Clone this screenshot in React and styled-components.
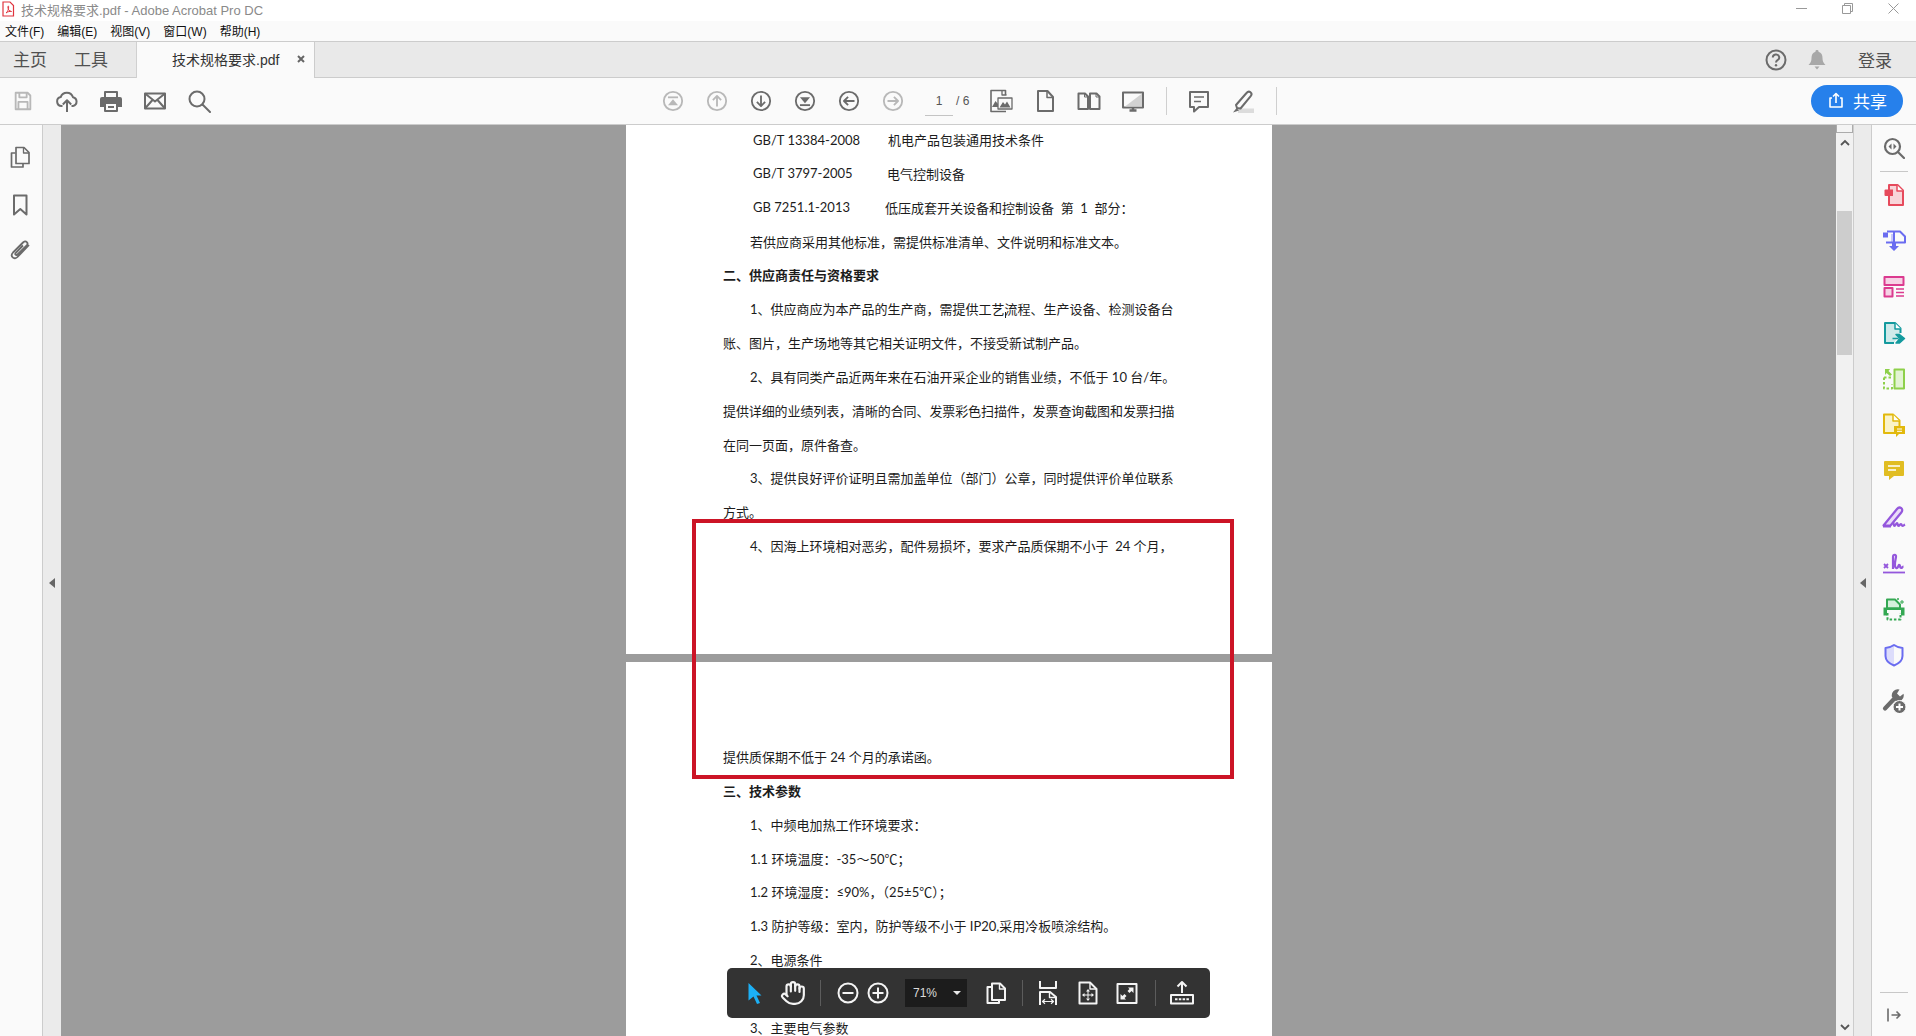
import React from "react";
import styled, { createGlobalStyle } from "styled-components";
import { Hand } from "lucide-react";

const Global = createGlobalStyle`
  html, body { margin: 0; padding: 0; background: #fff; }
  * { box-sizing: border-box; }
  body { font-family: "Liberation Sans", "Noto Sans CJK SC", sans-serif; }
`;

const GRAY = "#6b6b6b";
const DIS = "#b8b8b8";

const Svg = styled.svg`
  display: block;
  flex: none;
`;
const I = ({ s = 24, vb = 24, c = GRAY, w = 2, children }) => (
  <Svg width={s} height={s} viewBox={`0 0 ${vb} ${vb}`} fill="none" stroke={c} strokeWidth={w} strokeLinejoin="round">
    {children}
  </Svg>
);

const Window = styled.div`
  width: 1916px;
  height: 1036px;
  display: flex;
  flex-direction: column;
  overflow: hidden;
  background: #fafafa;
`;
const TitleBar = styled.div`
  height: 21px;
  background: #fff;
  display: flex;
  align-items: center;
  padding: 0 0 3px 1px;
`;
const TitleText = styled.span`
  margin-left: 6px;
  font-size: 13px;
  color: #8a8a8a;
  white-space: nowrap;
`;
const WinControls = styled.div`
  margin-left: auto;
  display: flex;
  align-items: center;
  height: 16px;
  align-self: flex-start;
`;
const WinSlot = styled.span`
  width: 46px;
  height: 16px;
  display: flex;
  align-items: center;
  justify-content: center;
`;
const MenuBar = styled.div`
  height: 21px;
  background: #fafafa;
  border-bottom: 1px solid #cccccc;
  display: flex;
  align-items: center;
  padding: 0 0 2px 5px;
  gap: 13px;
`;
const MenuItem = styled.span`
  font-size: 12px;
  color: #111;
  white-space: nowrap;
`;
const TabStrip = styled.div`
  height: 36px;
  background: #e9e9e9;
  border-bottom: 1px solid #cccccc;
  display: flex;
  align-items: stretch;
`;
const NavTab = styled.span`
  font-size: 17px;
  color: #505050;
  display: flex;
  align-items: center;
  padding-bottom: 3px;
  margin-left: ${(p) => p.$ml}px;
`;
const DocTab = styled.div`
  margin-left: 28px;
  width: 179px;
  height: 36px;
  background: #fafafa;
  border-left: 1px solid #d0d0d0;
  border-right: 1px solid #cccccc;
  display: flex;
  align-items: center;
  padding: 0 0 3px 35px;
  font-size: 14px;
  color: #333;
  white-space: nowrap;
`;
const TabClose = styled.span`
  margin-left: 18px;
  display: flex;
`;
const StripRight = styled.div`
  margin-left: auto;
  display: flex;
  align-items: center;
  padding-right: 24px;
`;
const Login = styled.span`
  margin-left: 32px;
  font-size: 17px;
  color: #505050;
  padding-bottom: 1px;
`;
const BellWrap = styled.span`
  margin-left: 21px;
  display: flex;
`;
const ToolBar = styled.div`
  height: 47px;
  background: #fafafa;
  border-bottom: 1px solid #cccccc;
  display: flex;
  align-items: center;
  padding-left: 1px;
`;
const ToolSlot = styled.span`
  width: 44px;
  height: 44px;
  display: flex;
  align-items: center;
  justify-content: center;
  flex: none;
`;
const ToolGroup = styled.div`
  display: flex;
  align-items: center;
  margin-left: ${(p) => p.$ml || 0}px;
`;
const PageInput = styled.span`
  width: 28px;
  height: 28px;
  margin-left: 10px;
  margin-top: 1px;
  border-bottom: 1px solid #c4c4c4;
  font-size: 12px;
  color: #555;
  display: flex;
  align-items: center;
  justify-content: center;
`;
const PageTotal = styled.span`
  margin-left: 3px;
  width: 14px;
  font-size: 12px;
  color: #555;
  white-space: nowrap;
`;
const ToolSep = styled.span`
  width: 1px;
  height: 28px;
  background: #cfcfcf;
  margin-left: ${(p) => p.$ml}px;
  flex: none;
`;
const ShareBtn = styled.button`
  margin-left: auto;
  margin-right: 13px;
  width: 92px;
  height: 32px;
  border: 0;
  border-radius: 16px;
  background: #2680eb;
  color: #fff;
  font: 400 17px "Noto Sans CJK SC", sans-serif;
  display: flex;
  align-items: center;
  padding: 0 0 2px 17px;
  gap: 9px;
`;
const Main = styled.div`
  flex: 1;
  display: flex;
  min-height: 0;
`;
const LeftPanel = styled.div`
  width: 43px;
  background: #fafafa;
  border-right: 1px solid #cccccc;
  display: flex;
  flex-direction: column;
  align-items: center;
  padding-top: 10px;
  padding-right: 2px;
  flex: none;
`;
const SideSlot = styled.span`
  height: 44px;
  width: 100%;
  margin-top: ${(p) => p.$mt || 0}px;
  display: flex;
  align-items: center;
  justify-content: center;
  flex: none;
`;
const Collapse = styled.div`
  width: ${(p) => p.$w}px;
  background: #ebebeb;
  display: flex;
  align-items: center;
  justify-content: center;
  padding-top: 4px;
  flex: none;
  border-left: ${(p) => (p.$line ? "1px solid #cccccc" : "0")};
  border-right: ${(p) => (p.$line ? "1px solid #cccccc" : "0")};
`;
const Tri = styled.span`
  width: 0;
  height: 0;
  border-top: 5px solid transparent;
  border-bottom: 5px solid transparent;
  border-right: 6px solid #666;
`;
const DocArea = styled.div`
  flex: 1;
  min-width: 0;
  position: relative;
  overflow: hidden;
  background: #9c9c9c;
  display: flex;
  flex-direction: column;
  align-items: center;
  gap: 8px;
`;
const Page = styled.div`
  width: 646px;
  flex: none;
  background: #fff;
  height: ${(p) => p.$h}px;
  padding-top: ${(p) => p.$pt || 0}px;
  padding-left: 97.5px;
  display: flex;
  flex-direction: column;
  gap: 3.85px;
`;
const Row = styled.div`
  height: 30px;
  flex: none;
  display: flex;
  align-items: center;
  white-space: pre;
  font-family: Lato, "Noto Sans CJK SC", sans-serif;
  font-size: 13px;
  color: #1c1c1c;
  font-weight: ${(p) => (p.$b ? 700 : 400)};
  padding-left: ${(p) => p.$in || 0}px;
  padding-bottom: 1px;
  letter-spacing: ${(p) => p.$ls || 0}px;
`;
const Code = styled.span`
  display: inline-block;
  width: ${(p) => p.$w}px;
`;
const TextCaret = styled.span`
  width: 1px;
  height: 6px;
  margin-right: -1px;
  background: #222;
  transform: translateY(6px);
  flex: none;
`;
const RedBox = styled.div`
  position: absolute;
  left: 631px;
  top: 394px;
  width: 542px;
  height: 260px;
  border: 4px solid #cc1426;
`;
const FloatBar = styled.div`
  position: absolute;
  left: 666px;
  top: 843px;
  width: 483px;
  height: 50px;
  background: #333333;
  border-radius: 5px;
  display: flex;
  align-items: center;
  padding-left: 9px;
`;
const FloatSlot = styled.span`
  width: ${(p) => p.$w || 30}px;
  height: 30px;
  margin-left: ${(p) => p.$ml || 0}px;
  display: flex;
  align-items: center;
  justify-content: center;
  flex: none;
`;
const FloatSep = styled.span`
  width: 1px;
  height: 26px;
  background: #5c5c5c;
  margin-left: ${(p) => p.$ml}px;
  flex: none;
`;
const ZoomBox = styled.div`
  width: 62px;
  height: 28px;
  margin-left: 12px;
  background: #1c1c1c;
  display: flex;
  align-items: center;
  padding-left: 8px;
  font-size: 12px;
  color: #dcdcdc;
  flex: none;
`;
const ZoomCaret = styled.span`
  margin-left: 16px;
  width: 0;
  height: 0;
  border-left: 4px solid transparent;
  border-right: 4px solid transparent;
  border-top: 4px solid #e8e8e8;
`;
const ScrollBar = styled.div`
  width: 17px;
  background: #f1f1f1;
  display: flex;
  flex-direction: column;
  align-items: center;
  flex: none;
`;
const SplitBox = styled.div`
  width: 100%;
  height: 8px;
  background: #f4f4f4;
  border: 1px solid #ababab;
  border-top: 0;
  flex: none;
`;
const ArrowSlot = styled.span`
  height: 18px;
  display: flex;
  align-items: center;
  margin-top: ${(p) => (p.$auto ? "auto" : "0")};
  flex: none;
`;
const Thumb = styled.div`
  width: 15px;
  height: 144px;
  margin-top: 60px;
  background: #cdcdcd;
  flex: none;
`;
const RightPanel = styled.div`
  width: 44px;
  flex: none;
  background: #fafafa;
  display: flex;
  flex-direction: column;
  align-items: center;
`;
const RightSlot = styled.span`
  height: ${(p) => p.$h || 46}px;
  width: 100%;
  display: flex;
  align-items: center;
  justify-content: center;
  flex: none;
`;
const RightRule = styled.div`
  width: 28px;
  height: 1px;
  background: #c8c8c8;
  flex: none;
  margin-top: ${(p) => (p.$auto ? "auto" : "0")};
`;

/* ---------- drawings ---------- */
const AcroDoc = () => (
  <Svg width="14" height="16" viewBox="0 0 14 16" fill="none" stroke="#e0353f" strokeWidth="1.2">
    <path d="M2 1h7l3.500 3.500V15H2z" fill="#fff" />
    <path d="M5 12c1.500-1 3-4 2.600-6.500C7.200 4.500 6.700 5 7 7c.4 2 1.500 3 3.500 3.500-1.500-.4-4 .2-5.500 1.500z" strokeWidth="1" />
  </Svg>
);
const Save = () => (
  <I s={22} c={DIS}>
    <path d="M4 3h13l3 3v15H4z" />
    <path d="M8 3v5h8V3M7 21v-8h10v8" />
  </I>
);
const Upload = () => (
  <I s={24}>
    <path d="M7.500 17H6.500a4.500 4.500 0 0 1-.8-8.900A6.500 6.500 0 0 1 18 8.200 4.500 4.500 0 0 1 18 17h-1.500" />
    <path d="M12 23V11.500M7.800 15.500 12 11.300l4.200 4.200" />
  </I>
);
const Printer = () => (
  <I s={24}>
    <path d="M6 8V3h12v5" />
    <path fill={GRAY} stroke="none" d="M3 8h18a2 2 0 0 1 2 2v8h-4v-4H5v4H1v-8a2 2 0 0 1 2-2z" />
    <path d="M6 14h12v8H6z" />
    <path d="M9 18h6" />
  </I>
);
const Mail = () => (
  <I s={24}>
    <path d="M2 4.500h20v15H2z" />
    <path d="M2 4.500 12 12.500l10-8M2 19.500l7.500-8.500M22 19.500 14.500 11" />
  </I>
);
const Search = () => (
  <I s={24}>
    <circle cx="10" cy="10" r="7.500" />
    <path d="M15.500 15.500 23 23" strokeLinecap="round" />
  </I>
);
const Nav = ({ c, children }) => (
  <I s={22} c={c}>
    <circle cx="12" cy="12" r="10" />
    {children}
  </I>
);
const Triangle = ({ c, d }) => <path d={d} fill={c} stroke="none" />;
const ToTop = () => (
  <Nav c={DIS}>
    <path d="M6.500 8h11" />
    <Triangle c={DIS} d="M12 10l5.500 6.500h-11z" />
  </Nav>
);
const ToBottom = () => (
  <Nav c={GRAY}>
    <path d="M6.500 16.500h11" />
    <Triangle c={GRAY} d="M12 14.500 6.500 8h11z" />
  </Nav>
);
const UpCircle = () => (
  <Nav c={DIS}><path d="M12 18V6.500M7.500 11 12 6.500l4.500 4.500" /></Nav>
);
const DownCircle = () => (
  <Nav c={GRAY}><path d="M12 6v11.500M7.500 13l4.500 4.500 4.500-4.500" /></Nav>
);
const LeftCircle = () => (
  <Nav c={GRAY}><path d="M18 12H6.500M11 7.500 6.500 12l4.500 4.500" /></Nav>
);
const RightCircle = () => (
  <Nav c={DIS}><path d="M6 12h11.500M13 7.500l4.500 4.500-4.500 4.500" /></Nav>
);
const DocImages = () => (
  <I s={24}>
    <path d="M16.500 6V1.500H2v21h15" strokeWidth="1.600" />
    <path d="M13 1.500v4.500h4.500" strokeWidth="1.300" />
    <path d="M9 9h14v11H9z" fill="#fafafa" strokeWidth="1.300" />
    <path d="M10.500 18.500 14 13l2 2.500 2-3 3.500 6z" fill={GRAY} stroke="none" />
    <path d="M3 18l3.500-6L9 15v3z" fill={GRAY} stroke="none" />
  </I>
);
const SingleDoc = () => (
  <I s={24}>
    <path d="M5 2h9.500L20 8v14H5z" />
    <path d="M14 2v6.500h6" strokeWidth="1.500" />
  </I>
);
const TwoDocs = () => (
  <I s={24}>
    <path d="M1.500 4.500h6.500L11 7.500V20H1.500zM13 4.500h6.500L22.500 7.500V20H13z" />
    <path d="M7.500 4.500v3.500H11M19 4.500v3.500h3.500" strokeWidth="1" />
  </I>
);
const Screen = () => (
  <I s={24}>
    <path d="M2 3.500h20v15H2z" />
    <path d="M21 4.500v13H4z" fill="#d2d2d2" stroke="none" />
    <path d="M8.500 21.500h7M12 18.500v3" strokeWidth="2.500" />
  </I>
);
const Comment = () => (
  <I s={24}>
    <path d="M3 3h18v15h-9l-5 4.500V18H3z" />
    <path d="M7 8h10M7 12.500h7" strokeWidth="1.400" />
  </I>
);
const Marker = () => (
  <I s={24}>
    <path d="M7 19.500h16V24H7z" fill="#dcdcdc" stroke="none" />
    <path d="M5 16 15.500 4c1-1.200 2.800-1.700 4-.7s1.200 2.700.2 3.900L9.500 19.500 6 19z" fill="#fafafa" />
    <path d="M2 23.500l3.500-4.500 2.500 2.500z" fill={GRAY} stroke="none" />
  </I>
);
const ShareIcon = () => (
  <I s={16} c="#fff" w={1.6} vb={16}>
    <path d="M4 6H2v9h12V6h-2" />
    <path d="M8 11V1.500M5 4.500l3-3 3 3" />
  </I>
);
const HelpIcon = () => (
  <Svg width="22" height="22" viewBox="0 0 22 22" fill="none" stroke={GRAY} strokeWidth="2">
    <circle cx="11" cy="11" r="9.500" />
    <path d="M7.800 8.500a3.200 3 0 1 1 4.700 2.600c-1 .6-1.500 1.200-1.500 2.400" />
    <circle cx="11" cy="16.200" r="1.200" fill={GRAY} stroke="none" />
  </Svg>
);
const Bell = () => (
  <Svg width="18" height="20" viewBox="0 0 18 20" fill="#a8a8a8">
    <path d="M9 0a1.500 1.500 0 0 1 1.500 1.700C13.500 2.600 14.500 5 14.500 8c0 3.500 1 5 3 7H.5c2-2 3-3.500 3-7 0-3 1-5.400 4-6.300A1.500 1.500 0 0 1 9 0z" />
    <path d="M6.500 16.500h5L9 19.500z" />
  </Svg>
);
const Minimize = () => <Svg width="11" height="1" viewBox="0 0 11 1"><path d="M0 0h11v1H0z" fill="#999" /></Svg>;
const Restore = () => (
  <Svg width="11" height="11" viewBox="0 0 11 11" fill="none" stroke="#999">
    <path d="M.5 2.500h8v8h-8zM2.500 2.500v-2h8v8h-2" />
  </Svg>
);
const CloseWin = () => (
  <Svg width="11" height="11" viewBox="0 0 11 11" fill="none" stroke="#999"><path d="M.5.500l10 10M10.500.500l-10 10" /></Svg>
);
const TabX = () => (
  <Svg width="8" height="8" viewBox="0 0 8 8" fill="none" stroke="#666" strokeWidth="2"><path d="M1 1l6 6M7 1 1 7" /></Svg>
);

const PagesIcon = () => (
  <I s={22} vb={22} w={1.7}>
    <path d="M6.500 7H2.500v14h11.500v-3" />
    <path d="M7 1.500h8l5 5v11H7z" fill="#fafafa" />
    <path d="M14.500 1.500v5.500h5.500" strokeWidth="1.300" />
  </I>
);
const BookmarkIcon = () => (
  <I s={22} vb={22} w={2}><path d="M5 1.500h12.500v19l-6.200-5.500L5 20.500z" /></I>
);
const ClipIcon = () => (
  <I s={22} vb={22} w={1.8}>
    <path d="M20 6 8.500 18c-1.500 1.500-3.500 1.700-4.800.4S2.600 15 4 13.500L14 3.500c1.200-1.200 2.800-1.400 3.800-.4s.8 2.500-.3 3.600L8.500 15.500c-.6.600-1.400.7-1.900.2s-.4-1.300.2-1.900L14 6.500" />
  </I>
);

/* right column */
const ZoomDoc = () => (
  <I s={22} vb={22} w={2.2}>
    <circle cx="9.500" cy="9.500" r="7.500" />
    <path d="M15 15l6 6" strokeLinecap="round" />
    <path d="M8.500 6.500 5.500 9.500l3 3zM10.500 6.500l3 3-3 3z" fill={GRAY} stroke="none" />
  </I>
);
const CreatePdf = () => (
  <I s={24} c="#e64a5c">
    <path d="M7 2h8.500L21 7.500V22H7z" fill="#f8d5d9" />
    <path d="M15 2v6h6" fill="#fff" strokeWidth="1.500" />
    <path d="M3.500 6.500H11V13H3.500a1 1 0 0 1-1-1V7.500a1 1 0 0 1 1-1z" fill="#e64a5c" stroke="none" />
  </I>
);
const CombinePdf = () => (
  <I s={24} c="#6a6cf0">
    <path d="M9 5h3v8.500H9z" fill="#c8c9fa" stroke="none" />
    <path d="M5 2.500h7v11H4" />
    <path d="M12.500 2.500H18l5 5v6H12" fill="none" />
    <path d="M1 3.500h5v5H1z" fill="#6a6cf0" stroke="none" />
    <path d="M10 14h4v3h3l-5 5-5-5h3z" fill="#6a6cf0" stroke="none" />
  </I>
);
const OrganizePages = () => (
  <I s={24} c="#db3a8f">
    <path d="M2.500 2h19v8h-19z" fill="#f6d2e5" />
    <path d="M2.500 13h8v8.500h-8z" fill="#f6d2e5" />
    <path d="M14 14h8M14 17.500h8M14 21h8" strokeWidth="1.300" />
  </I>
);
const ExportPdf = () => (
  <I s={24} c="#149a9e">
    <path d="M12 22H3V2h10l5.500 5.500V12" fill="#cfeaea" />
    <path d="M13 2v6h6" fill="#fff" strokeWidth="1.500" />
    <path d="M10.500 17.500h6M14 13.500h3.500l5 4-5 4.500H14l4-4.500z" strokeWidth="1.500" fill="#149a9e" />
  </I>
);
const EditPdf = () => (
  <I s={24} c="#8ed04a">
    <path d="M12.500 2.500h9.500v19h-9.500z" fill="#e3f4d3" />
    <path d="M2 10.500h8M2 10.500V21.500h8v-4" strokeDasharray="2.500 2" />
    <path d="M3 2h5L6.500 4 10 7.500 8 9 4.500 6 3 8z" fill="#8ed04a" stroke="none" />
  </I>
);
const CommentDoc = () => (
  <I s={24} c="#e2b90c">
    <path d="M2 1.500h9l6.500 6V20H2z" fill="#faf3c8" />
    <path d="M11 1.500v6.500h6.500" fill="#fff" strokeWidth="1.500" />
    <path d="M12 13h11v8h-6l-3 3v-3h-2z" fill="#e2b90c" stroke="none" />
    <path d="M15 16h5M15 18.300h5" stroke="#fff" strokeWidth="1" />
  </I>
);
const CommentFill = () => (
  <Svg width="22" height="22" viewBox="0 0 22 22">
    <path d="M2 1h18a1 1 0 0 1 1 1v13a1 1 0 0 1-1 1H11l-5 4v-4H2a1 1 0 0 1-1-1V2a1 1 0 0 1 1-1z" fill="#e1bd22" />
    <path d="M5 6h12M5 10h8" stroke="#fff" strokeWidth="1.600" />
  </Svg>
);
const FillSign = () => (
  <I s={26} vb={26} c="#9457dc" w={2.2}>
    <path d="M2.500 21.500 16 5c1.200-1.500 3-1.800 4.300-.8s1.200 2.800 0 4.300L9.500 21.500z" fill="#eadcf9" />
    <path d="M2 22.500h8M12 18c1 2 .5 4 1.500 4s1.500-3 2.500-3 .5 3 1.500 3 1.500-2 2.500-2 .5 2 1.500 2 1.500-1 2.500-1.500" />
  </I>
);
const SendSign = () => (
  <I s={24} c="#9457dc">
    <path d="M1 21.500h22" strokeWidth="1.800" />
    <path d="M2 13l4 4M6 13l-4 4" strokeWidth="1.800" />
    <path d="M11 18V6c0-3 3.500-3 3 0-.5 3-1.500 6-1 9 .3 2 2 3 3 1s.5-2.500 1.500-2 .2 3 1.500 3 1.500-1.500 2.500-1.500" strokeWidth="2.200" />
  </I>
);
const PrintPro = () => (
  <I s={24} c="#34a853">
    <path d="M5 2.500h8l5 5v4H5z" fill="#d6f0dc" />
    <path d="M1.500 10.500h21v8H19V13H5v5.500H1.500z" fill="#34a853" stroke="none" />
    <path d="M5.500 16v6.500h13V16" strokeDasharray="2.500 1.800" />
    <path d="M20 3v4M18 5h4M16 1v2M15 2h2" strokeWidth="1" />
  </I>
);
const Shield = () => (
  <I s={24} c="#6a6cf0">
    <path d="M12 2 3.500 5v8c0 4 3.500 7.500 8.500 9.500V2z" fill="#dcdcfb" stroke="none" />
    <path d="M12 2C9 4 6 5 3.500 5v8c0 4 3.500 7.500 8.500 9.500 5-2 8.500-5.500 8.500-9.500V5C18 5 15 4 12 2z" />
  </I>
);
const WrenchPlus = () => (
  <Svg width="24" height="24" viewBox="0 0 24 24">
    <path d="M3 19.500 11.500 10.500" stroke={GRAY} strokeWidth="4.200" strokeLinecap="round" />
    <path d="M17.500.6a6 6 0 0 0-7.500 7.400l3.500 4a6 6 0 0 0 8-7.200L18 7.500l-3-3z" fill={GRAY} />
    <circle cx="17.500" cy="18" r="6.500" fill={GRAY} stroke="#fafafa" strokeWidth="1" />
    <path d="M14 18h7M17.500 14.500v7" stroke="#fff" strokeWidth="2" />
  </Svg>
);
const Expand = () => (
  <I s={16} vb={16} w={1.6}>
    <path d="M2 1.500v13M5.500 8H14M10.500 4.500 14 8l-3.500 3.500" />
  </I>
);
const Chevron = ({ d }) => (
  <Svg width="10" height="7" viewBox="0 0 10 7" fill="none" stroke="#555" strokeWidth="1.800"><path d={d} /></Svg>
);

/* floating bar */
const WHITE = "#f4f4f4";
const ArrowTool = () => (
  <Svg width="14" height="21" viewBox="0 0 14 21"><path d="M.5 0 13.500 12.500H8.500L12 20l-3 1L5.500 13.500.5 17.500z" fill="#1cb0f6" /></Svg>
);
const RoundTool = ({ plus }) => (
  <I s={22} vb={22} c={WHITE} w={2}>
    <circle cx="11" cy="11" r="9.500" />
    <path d={plus ? "M5.500 11h11M11 5.500v11" : "M5.500 11h11"} />
  </I>
);
const CopyTool = () => (
  <I s={22} vb={22} c={WHITE} w={2}>
    <path d="M7 5H2.500v16H14v-3" />
    <path d="M7 1.500h8l5 5v11.500H7z" fill="#333" />
    <path d="M14.500 1.500v5.500h5.500" strokeWidth="1.400" />
  </I>
);
const FitWidth = () => (
  <I s={24} c={WHITE} w={2}>
    <path d="M4 0v7h16V0" />
    <path d="M4 24V11h10l6 5v8" />
    <path d="M13.500 11v5.500H20" strokeWidth="1.400" />
    <path d="M6.500 20.500h11M9 18.300 6.500 20.500 9 22.700M15 18.300l2.500 2.200-2.500 2.200" strokeWidth="1.200" />
  </I>
);
const FitPage = () => (
  <I s={24} c={WHITE} w={2}>
    <path d="M3.500 1.500H14l6.500 6.500v14.500h-17z" />
    <path d="M14 1.500V8h6.500" strokeWidth="1.400" />
    <path d="M12 10v7.500M8 14h8" strokeWidth="1" />
    <path d="M12 8 10 10.500h4zM12 20 10 17.500h4zM6 14 8.500 12v4zM18 14 15.500 12v4z" fill={WHITE} stroke="none" />
  </I>
);
const FullScreen = () => (
  <I s={24} c={WHITE} w={2}>
    <path d="M2.500 3h19v19h-19z" />
    <path d="M13 6.500h5.500V12l-2-2-2 2-2-2 2-2zM11 18.500H5.500V13l2 2 2-2 2 2-2 2z" fill={WHITE} stroke="none" />
  </I>
);
const ShareTool = () => (
  <I s={26} vb={26} c={WHITE} w={2}>
    <path d="M13 13V2M8.500 6.500 13 2l4.500 4.500" />
    <path d="M2 15h22v8.500H2z" />
    <path d="M6 19.300h14" strokeWidth="2" strokeDasharray="2.500 1.300" />
  </I>
);

const Page1 = [
  ["GB/T 13384-2008", 135, "机电产品包装通用技术条件"],
  ["GB/T 3797-2005", 134, "电气控制设备"],
  ["GB 7251.1-2013", 132, "低压成套开关设备和控制设备  第  1  部分："],
];

export default function App() {
  return (
    <Window>
      <Global />
      <TitleBar>
        <AcroDoc />
        <TitleText>技术规格要求.pdf - Adobe Acrobat Pro DC</TitleText>
        <WinControls>
          <WinSlot><Minimize /></WinSlot>
          <WinSlot><Restore /></WinSlot>
          <WinSlot><CloseWin /></WinSlot>
        </WinControls>
      </TitleBar>
      <MenuBar>
        <MenuItem>文件(F)</MenuItem>
        <MenuItem>编辑(E)</MenuItem>
        <MenuItem>视图(V)</MenuItem>
        <MenuItem>窗口(W)</MenuItem>
        <MenuItem>帮助(H)</MenuItem>
      </MenuBar>
      <TabStrip>
        <NavTab $ml={13}>主页</NavTab>
        <NavTab $ml={27}>工具</NavTab>
        <DocTab>
          技术规格要求.pdf
          <TabClose><TabX /></TabClose>
        </DocTab>
        <StripRight>
          <HelpIcon />
          <BellWrap><Bell /></BellWrap>
          <Login>登录</Login>
        </StripRight>
      </TabStrip>
      <ToolBar>
        <ToolSlot><Save /></ToolSlot>
        <ToolSlot><Upload /></ToolSlot>
        <ToolSlot><Printer /></ToolSlot>
        <ToolSlot><Mail /></ToolSlot>
        <ToolSlot><Search /></ToolSlot>
        <ToolGroup $ml={430}>
          <ToolSlot><ToTop /></ToolSlot>
          <ToolSlot><UpCircle /></ToolSlot>
          <ToolSlot><DownCircle /></ToolSlot>
          <ToolSlot><ToBottom /></ToolSlot>
          <ToolSlot><LeftCircle /></ToolSlot>
          <ToolSlot><RightCircle /></ToolSlot>
        </ToolGroup>
        <PageInput>1</PageInput>
        <PageTotal>/ 6</PageTotal>
        <ToolGroup $ml={9}>
          <ToolSlot><DocImages /></ToolSlot>
          <ToolSlot><SingleDoc /></ToolSlot>
          <ToolSlot><TwoDocs /></ToolSlot>
          <ToolSlot><Screen /></ToolSlot>
        </ToolGroup>
        <ToolSep $ml={11} />
        <ToolGroup $ml={10}>
          <ToolSlot><Comment /></ToolSlot>
          <ToolSlot><Marker /></ToolSlot>
        </ToolGroup>
        <ToolSep $ml={11} />
        <ShareBtn><ShareIcon />共享</ShareBtn>
      </ToolBar>
      <Main>
        <LeftPanel>
          <SideSlot><PagesIcon /></SideSlot>
          <SideSlot $mt={4}><BookmarkIcon /></SideSlot>
          <SideSlot $mt={1}><ClipIcon /></SideSlot>
        </LeftPanel>
        <Collapse $w={18}><Tri /></Collapse>
        <DocArea>
          <Page $h={529}>
            {Page1.map(([code, w, text]) => (
              <Row key={code} $in={30}>
                <Code $w={w}>{code}</Code>
                {text}
              </Row>
            ))}
            <Row $in={27}>若供应商采用其他标准，需提供标准清单、文件说明和标准文本。</Row>
            <Row $b>二、供应商责任与资格要求</Row>
            <Row $in={27}>1、供应商应为本产品的生产商，需提供工艺<TextCaret />流程、生产设备、检测设备台</Row>
            <Row>账、图片，生产场地等其它相关证明文件，不接受新试制产品。</Row>
            <Row $in={27}>2、具有同类产品近两年来在石油开采企业的销售业绩，不低于 10 台/年。</Row>
            <Row $ls={-0.1}>提供详细的业绩列表，清晰的合同、发票彩色扫描件，发票查询截图和发票扫描</Row>
            <Row>在同一页面，原件备查。</Row>
            <Row $in={27}>3、提供良好评价证明且需加盖单位（部门）公章，同时提供评价单位联系</Row>
            <Row>方式。</Row>
            <Row $in={27}>4、因海上环境相对恶劣，配件易损坏，要求产品质保期不小于  24 个月，</Row>
          </Page>
          <Page $h={400} $pt={80}>
            <Row>提供质保期不低于 24 个月的承诺函。</Row>
            <Row $b>三、技术参数</Row>
            <Row $in={27}>1、中频电加热工作环境要求：</Row>
            <Row $in={27}>1.1 环境温度：-35～50℃；</Row>
            <Row $in={27}>1.2 环境湿度：≤90%，（25±5℃）；</Row>
            <Row $in={27}>1.3 防护等级：室内，防护等级不小于 IP20,采用冷板喷涂结构。</Row>
            <Row $in={27}>2、电源条件</Row>
            <Row $in={27} />
            <Row $in={27}>3、主要电气参数</Row>
          </Page>
          <RedBox />
          <FloatBar>
            <FloatSlot $w={38}><ArrowTool /></FloatSlot>
            <FloatSlot $w={38}><Hand size={26} color={WHITE} strokeWidth={2} /></FloatSlot>
            <FloatSep $ml={8} />
            <FloatSlot $ml={12}><RoundTool /></FloatSlot>
            <FloatSlot><RoundTool plus /></FloatSlot>
            <ZoomBox>71%<ZoomCaret /></ZoomBox>
            <FloatSlot $ml={14}><CopyTool /></FloatSlot>
            <FloatSep $ml={11} />
            <FloatSlot $ml={10}><FitWidth /></FloatSlot>
            <FloatSlot $ml={10}><FitPage /></FloatSlot>
            <FloatSlot $ml={9}><FullScreen /></FloatSlot>
            <FloatSep $ml={13} />
            <FloatSlot $ml={11}><ShareTool /></FloatSlot>
          </FloatBar>
        </DocArea>
        <ScrollBar>
          <SplitBox />
          <ArrowSlot><Chevron d="M1 6 5 2l4 4" /></ArrowSlot>
          <Thumb />
          <ArrowSlot $auto><Chevron d="M1 1l4 4 4-4" /></ArrowSlot>
        </ScrollBar>
        <Collapse $w={19} $line><Tri /></Collapse>
        <RightPanel>
          <RightSlot><ZoomDoc /></RightSlot>
          <RightRule />
          <RightSlot><CreatePdf /></RightSlot>
          <RightSlot><CombinePdf /></RightSlot>
          <RightSlot><OrganizePages /></RightSlot>
          <RightSlot><ExportPdf /></RightSlot>
          <RightSlot><EditPdf /></RightSlot>
          <RightSlot><CommentDoc /></RightSlot>
          <RightSlot><CommentFill /></RightSlot>
          <RightSlot><FillSign /></RightSlot>
          <RightSlot><SendSign /></RightSlot>
          <RightSlot><PrintPro /></RightSlot>
          <RightSlot><Shield /></RightSlot>
          <RightSlot><WrenchPlus /></RightSlot>
          <RightRule $auto />
          <RightSlot $h={43}><Expand /></RightSlot>
        </RightPanel>
      </Main>
    </Window>
  );
}
